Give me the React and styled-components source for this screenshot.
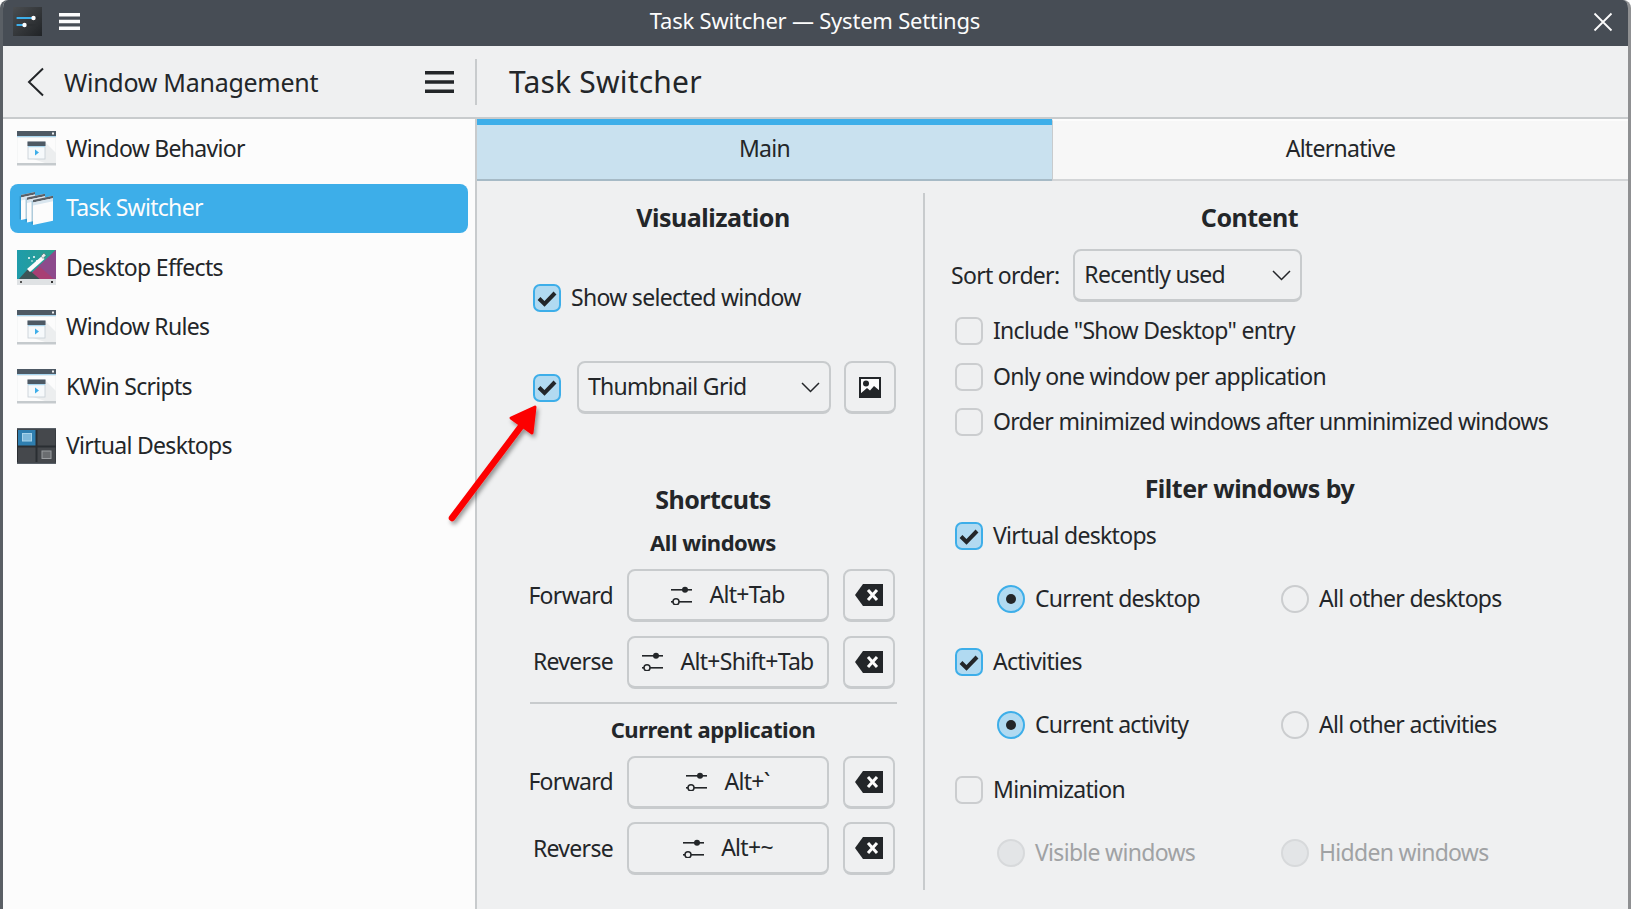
import React from 'react';
import styled, { createGlobalStyle } from 'styled-components';

const Global = createGlobalStyle`
  html, body { margin: 0; padding: 0; background: #fff; }
  body { font-family: "Noto Sans", "Open Sans", sans-serif; color: #232629; }
  * { box-sizing: border-box; }
`;

const Page = styled.div`
  position: relative;
  width: 1631px;
  height: 909px;
  overflow: hidden;
  display: flex;
  flex-direction: column;
  background: #fcfcfc;
  border-left: 3px solid #5a5f65;
  border-right: 3px solid #8f9092;
  border-top-left-radius: 8px;
  border-top-right-radius: 8px;
  font-size: 23px;
  line-height: 26px;
  letter-spacing: -0.7px;
`;
const Label = styled.span`
  display: block;
  white-space: nowrap;
  padding-bottom: 2px;
`;
const TitleBar = styled.header`
  position: relative;
  height: 46px;
  flex: none;
  display: flex;
  align-items: center;
  background: #474d55;
  padding: 0 0 3px 10px;
  gap: 17px;
  color: #fcfcfc;
`;
const TitleText = styled.div`
  position: absolute;
  left: 0;
  right: 0;
  top: 7px;
  padding-right: 1px;
  text-align: center;
  font-size: 22px;
  line-height: 26px;
  letter-spacing: -0.22px;
`;
const CloseBtn = styled.svg`
  position: absolute;
  right: 15px;
  top: 12px;
`;
const HeaderRow = styled.div`
  height: 73px;
  flex: none;
  display: flex;
  align-items: center;
  background: #eff0f1;
  border-bottom: 2px solid #c8cbcd;
`;
const HeaderLeft = styled.div`
  width: 474px;
  height: 46px;
  flex: none;
  display: flex;
  align-items: center;
  padding-left: 24px;
  padding-right: 21px;
  border-right: 2px solid #c8cbcd;
`;
const BackTitle = styled.div`
  flex: 1;
  margin-left: 19px;
  font-size: 25px;
  line-height: 30px;
  letter-spacing: -0.28px;
`;
const PageTitle = styled.div`
  margin-left: 32px;
  font-size: 30px;
  line-height: 36px;
  letter-spacing: 0.2px;
`;
const Body = styled.div`
  flex: 1;
  display: flex;
  min-height: 0;
`;
const Sidebar = styled.nav`
  width: 474px;
  flex: none;
  background: #fcfcfc;
  border-right: 2px solid #c8cbcd;
  padding: 5px 7px 0 7px;
  display: flex;
  flex-direction: column;
  gap: 10.5px;
`;
const SideItem = styled.div`
  height: 49px;
  display: flex;
  align-items: center;
  gap: 10px;
  padding-left: 7px;
  border-radius: 8px;
  background: ${(p) => (p.$active ? '#3daee9' : 'transparent')};
  color: ${(p) => (p.$active ? '#fcfcfc' : '#232629')};
`;
const Main = styled.main`
  flex: 1;
  display: flex;
  flex-direction: column;
  background: #eff0f1;
  min-width: 0;
`;
const TabBar = styled.div`
  height: 62px;
  flex: none;
  display: flex;
`;
const Tab = styled.div`
  display: flex;
  align-items: center;
  justify-content: center;
  flex: ${(p) => (p.$active ? '0 0 575px' : '1')};
  background: ${(p) => (p.$active ? '#c9e1ef' : '#f7f7f7')};
  border-top: ${(p) => (p.$active ? '6px solid #3daee9' : '2px solid #fcfcfc')};
  border-bottom: 2px solid ${(p) => (p.$active ? '#a6bac6' : '#d3d5d7')};
  border-left: ${(p) => (p.$active ? 'none' : '1px solid #c8cbcd')};
  padding-top: ${(p) => (p.$active ? '0' : '4px')};
  padding-bottom: 6px;
`;
const Columns = styled.div`
  flex: 1;
  display: flex;
  padding-top: 12px;
  padding-bottom: 19px;
  min-height: 0;
`;
const LeftCol = styled.section`
  width: 448px;
  flex: none;
  padding: 0 27px 0 53px;
  border-right: 2px solid #c8cbcd;
  display: flex;
  flex-direction: column;
`;
const RightCol = styled.section`
  flex: 1;
  padding: 0 88px 0 26px;
  display: flex;
  flex-direction: column;
`;
const Heading = styled.h2`
  margin: ${(p) => p.$top || 0}px 0 0;
  height: 30px;
  line-height: 28px;
  text-align: center;
  font-size: 25px;
  font-weight: 700;
  letter-spacing: -0.5px;
  white-space: nowrap;
`;
const SubHeading = styled.h3`
  margin: ${(p) => p.$top || 0}px 0 0;
  height: 28px;
  line-height: 26px;
  text-align: center;
  font-size: 22px;
  font-weight: 700;
  letter-spacing: -0.45px;
`;
const CheckRow = styled.div`
  margin-top: ${(p) => p.$top || 0}px;
  margin-left: ${(p) => p.$left || 0}px;
  display: flex;
  align-items: center;
  height: 28px;
  gap: 10px;
`;
const CheckBox = styled.span`
  width: 28px;
  height: 28px;
  flex: none;
  margin-left: ${(p) => p.$left || 0}px;
  display: flex;
  align-items: center;
  justify-content: center;
  border-radius: 7px;
  border: 2px solid ${(p) => (p.$on ? '#3daee9' : '#cbcdcf')};
  background: ${(p) => (p.$on ? '#b1daf1' : '#eff0f1')};
`;
const ComboRow = styled.div`
  margin-top: 49px;
  display: flex;
  align-items: center;
`;
const Combo = styled.div`
  width: ${(p) => p.$w}px;
  height: 53px;
  flex: none;
  margin-left: ${(p) => p.$left || 0}px;
  display: flex;
  align-items: center;
  justify-content: space-between;
  padding: 0 9px;
  border: 2px solid #c8cbcd;
  border-bottom-width: 3px;
  border-radius: 8px;
  background: #eff0f1;
`;
const SquareBtn = styled.div`
  width: ${(p) => p.$w || 52}px;
  height: 53px;
  margin-left: ${(p) => p.$left || 0}px;
  display: flex;
  align-items: center;
  justify-content: center;
  border: 2px solid #c8cbcd;
  border-bottom-width: 3px;
  border-radius: 8px;
  background: #eff0f1;
`;
const ShortcutGrid = styled.div`
  margin-top: ${(p) => p.$top || 0}px;
  display: grid;
  grid-template-columns: 83px 202px 52px;
  column-gap: 14px;
  row-gap: 13.5px;
  align-items: center;
`;
const ShortLabel = styled(Label)`
  justify-self: end;
`;
const KeyBtn = styled.div`
  height: 53px;
  display: flex;
  align-items: center;
  justify-content: center;
  gap: 17px;
  border: 2px solid #c8cbcd;
  border-bottom-width: 3px;
  border-radius: 8px;
  background: #eff0f1;
`;
const Divider = styled.hr`
  margin: 13px -1px 0 0;
  height: 2px;
  border: 0;
  background: #c8cbcd;
`;
const SortRow = styled.div`
  margin-top: 16px;
  display: flex;
  align-items: center;
  gap: 14px;
`;
const Radio = styled.span`
  width: 28px;
  height: 28px;
  flex: none;
  display: flex;
  align-items: center;
  justify-content: center;
  border-radius: 50%;
  border: 2px solid ${(p) => (p.$on ? '#3daee9' : p.$off ? '#d7d9db' : '#cbcdcf')};
  background: ${(p) => (p.$on ? '#b1daf1' : p.$off ? '#e3e5e7' : '#eff0f1')};
`;
const RadioDot = styled.span`
  width: 10px;
  height: 10px;
  border-radius: 50%;
  background: #232629;
`;
const RadioRow = styled.div`
  margin: 35px 0 0 46px;
  display: grid;
  grid-template-columns: 284px 1fr;
  height: 28px;
`;
const RadioItem = styled.label`
  display: flex;
  align-items: center;
  gap: 10px;
  color: ${(p) => (p.$off ? '#a0a2a4' : 'inherit')};
`;
const ArrowOverlay = styled.svg`
  position: absolute;
  left: 437px;
  top: 395px;
  pointer-events: none;
  overflow: visible;
`;

const Hamburger = ({ color, w, h, t }) => (
  <svg width={w} height={h} viewBox={`0 0 ${w} ${h}`}>
    <rect x="0" y="0" width={w} height={t} fill={color} />
    <rect x="0" y={(h - t) / 2} width={w} height={t} fill={color} />
    <rect x="0" y={h - t} width={w} height={t} fill={color} />
  </svg>
);

const AppIcon = () => (
  <svg width="29" height="29" viewBox="0 0 29 29">
    <defs>
      <linearGradient id="appbg" x1="0" y1="0" x2="1" y2="1">
        <stop offset="0" stopColor="#4a4d50" />
        <stop offset="1" stopColor="#202326" />
      </linearGradient>
    </defs>
    <rect width="29" height="29" fill="url(#appbg)" />
    <rect x="3" y="10" width="23" height="2" fill="#2c2f32" />
    <rect x="3.5" y="10" width="17" height="2" fill="#3daee9" />
    <circle cx="20.5" cy="11" r="2.2" fill="#fcfcfc" />
    <rect x="3" y="17" width="22" height="2" fill="#2c2f32" />
    <rect x="3.5" y="17" width="8" height="2" fill="#3daee9" />
    <circle cx="11.5" cy="18" r="2.2" fill="#fcfcfc" />
  </svg>
);

const WindowIcon = () => (
  <svg width="39" height="35" viewBox="0 0 39 35">
    <rect x="0" y="0" width="39" height="5" fill="#4d5964" />
    <rect x="35" y="1.5" width="2" height="2" fill="#eff0f1" />
    <rect x="0" y="5" width="39" height="1.5" fill="#a9d6ef" />
    <rect x="0" y="6.5" width="39" height="26" fill="#fcfcfc" stroke="#e3e6e8" strokeWidth="0.6" />
    <path d="M28 11 L39 22 V32 H28 L16 28 H28 Z" fill="#eceeef" />
    <rect x="0" y="32" width="39" height="2.5" fill="#c5cacd" />
    <rect x="11" y="11" width="17" height="17" fill="#f6f9fb" stroke="#c5ced4" strokeWidth="0.8" />
    <rect x="10.5" y="10.5" width="18" height="4.5" fill="#4d5964" />
    <rect x="11" y="15" width="17" height="1.2" fill="#a9d6ef" />
    <path d="M18 18.5 L22 21.5 L18 24.5 Z" fill="#3daee9" />
  </svg>
);

const SwitcherPane = ({ x, y, w }) => (
  <g transform={`translate(${x} ${y}) skewY(-12)`}>
    <rect x="-1.5" y="1" width="2" height="23" fill="#1d6f9e" opacity="0.35" />
    <rect width={w} height="25" fill="#fcfcfc" />
    <rect width={w} height="2.5" fill="#5a6168" />
    <rect y="2.5" width={w} height="3" fill="#d9e6ef" />
  </g>
);

const SwitcherIcon = () => (
  <svg width="39" height="36" viewBox="0 0 39 36">
    <SwitcherPane x={4} y={5} w={14} />
    <SwitcherPane x={10} y={7.5} w={18} />
    <SwitcherPane x={16} y={10} w={20} />
  </svg>
);

const EffectsIcon = () => (
  <svg width="39" height="35" viewBox="0 0 39 35">
    <defs>
      <linearGradient id="fxa" x1="0" y1="0" x2="1" y2="0">
        <stop offset="0" stopColor="#1f9cab" />
        <stop offset="1" stopColor="#2b9e8c" />
      </linearGradient>
    </defs>
    <rect width="39" height="31" fill="url(#fxa)" />
    <path d="M39 0 V31 H6 Z" fill="#a83f74" />
    <path d="M39 0 L22 16 L39 31 Z" fill="#8d4a8c" />
    <path d="M0 31 L11 19 L25 31 Z" fill="#3e5556" />
    <rect y="29" width="39" height="6" fill="#dfe2e4" />
    <rect x="3" y="31" width="2" height="2" fill="#555" />
    <rect x="34" y="31" width="2" height="2" fill="#333" />
    <path d="M10 19 L25 6 L27.5 9 L13 22 Z" fill="#fcfcfc" />
    <path d="M24 6 L27 3 L29 5.5 L26 8.5 Z" fill="#e8eaeb" stroke="#3e5556" strokeWidth="0.5" />
    <circle cx="12" cy="8" r="1" fill="#fcfcfc" />
    <circle cx="17" cy="7" r="1" fill="#fcfcfc" />
    <circle cx="20" cy="11" r="1" fill="#fcfcfc" />
    <circle cx="15" cy="11" r="0.8" fill="#fcfcfc" />
  </svg>
);

const DesktopsIcon = () => (
  <svg width="39" height="36" viewBox="0 0 39 36">
    <rect width="39" height="36" fill="#2a2e32" />
    <rect y="0" width="39" height="1.5" fill="#5a6168" />
    <rect y="34.5" width="39" height="1.5" fill="#5a6168" />
    <rect x="1" y="2" width="17.5" height="15.5" fill="#2f7fb0" />
    <rect x="5.5" y="5.5" width="9" height="7.5" fill="#7fb9da" stroke="#a7d3ea" />
    <rect x="20.5" y="2" width="18" height="15.5" fill="#45484c" />
    <rect x="1" y="19.5" width="17.5" height="15" fill="#45484c" />
    <rect x="20.5" y="19.5" width="18" height="15" fill="#45484c" />
    <rect x="25" y="23" width="9" height="7.5" fill="#6a6d70" stroke="#9a9da0" />
  </svg>
);

const Chevron = () => (
  <svg width="18" height="30" viewBox="0 0 18 30">
    <path d="M16 1.5 L2 15 L16 28.5" fill="none" stroke="#232629" strokeWidth="2" />
  </svg>
);

const ComboArrow = () => (
  <svg width="19" height="11" viewBox="0 0 19 11">
    <path d="M1 1 L9.5 9.5 L18 1" fill="none" stroke="#232629" strokeWidth="1.5" />
  </svg>
);

const Check = () => (
  <svg width="20" height="17" viewBox="0 0 20 17">
    <path d="M2 8.5 L7.5 14 L18 3" fill="none" stroke="#232629" strokeWidth="4" />
  </svg>
);

const ImageIcon = () => (
  <svg width="22" height="21" viewBox="0 0 22 21">
    <rect x="1" y="1" width="20" height="19" fill="#fcfcfc" stroke="#232629" strokeWidth="2" />
    <circle cx="7" cy="6.5" r="3" fill="#232629" />
    <path d="M1 17 L8 11 L11 13.5 L15 9 L21 14 V20 H1 Z" fill="#232629" />
  </svg>
);

const SlidersIcon = () => (
  <svg width="21" height="19" viewBox="0 0 21 19">
    <rect x="0" y="3" width="21" height="1.6" fill="#232629" />
    <circle cx="14" cy="3.8" r="3" fill="#232629" />
    <rect x="0" y="15" width="21" height="1.6" fill="#232629" />
    <circle cx="5" cy="15.8" r="3" fill="#eff0f1" stroke="#232629" strokeWidth="1.5" />
  </svg>
);

const DeleteIcon = () => (
  <svg width="28" height="22" viewBox="0 0 28 22">
    <path d="M8 0 H28 V22 H8 L0 11 Z" fill="#232629" />
    <path d="M13 6 L22 16 M22 6 L13 16" stroke="#fcfcfc" strokeWidth="3" />
  </svg>
);

const Check2 = ({ on, children, top, left }) => (
  <CheckRow $top={top} $left={left}>
    <CheckBox $on={on}>{on && <Check />}</CheckBox>
    <Label>{children}</Label>
  </CheckRow>
);

const RadioPair = ({ left, right, off, first }) => (
  <RadioRow>
    <RadioItem $off={off}>
      <Radio $on={first} $off={off}>{first && <RadioDot />}</Radio>
      <Label>{left}</Label>
    </RadioItem>
    <RadioItem $off={off}>
      <Radio $off={off} />
      <Label>{right}</Label>
    </RadioItem>
  </RadioRow>
);

const Shortcut = ({ label, keys }) => (
  <>
    <ShortLabel>{label}</ShortLabel>
    <KeyBtn>
      <SlidersIcon />
      <Label>{keys}</Label>
    </KeyBtn>
    <SquareBtn>
      <DeleteIcon />
    </SquareBtn>
  </>
);

const items = [
  ['Window Behavior', <WindowIcon />],
  ['Task Switcher', <SwitcherIcon />],
  ['Desktop Effects', <EffectsIcon />],
  ['Window Rules', <WindowIcon />],
  ['KWin Scripts', <WindowIcon />],
  ['Virtual Desktops', <DesktopsIcon />],
];

export default function App() {
  return (
    <>
      <Global />
      <Page>
        <TitleBar>
          <TitleText>Task Switcher — System Settings</TitleText>
          <AppIcon />
          <Hamburger color="#fcfcfc" w={21} h={17} t={3.5} />
          <CloseBtn width="20" height="20" viewBox="0 0 20 20">
            <path d="M1.5 1.5 L18.5 18.5 M18.5 1.5 L1.5 18.5" stroke="#fcfcfc" strokeWidth="1.8" />
          </CloseBtn>
        </TitleBar>
        <HeaderRow>
          <HeaderLeft>
            <Chevron />
            <BackTitle>Window Management</BackTitle>
            <Hamburger color="#232629" w={29} h={22} t={3.5} />
          </HeaderLeft>
          <PageTitle>Task Switcher</PageTitle>
        </HeaderRow>
        <Body>
          <Sidebar>
            {items.map(([label, icon], i) => (
              <SideItem key={label} $active={i === 1}>
                {icon}
                <Label>{label}</Label>
              </SideItem>
            ))}
          </Sidebar>
          <Main>
            <TabBar>
              <Tab $active><Label>Main</Label></Tab>
              <Tab><Label>Alternative</Label></Tab>
            </TabBar>
            <Columns>
              <LeftCol>
                <Heading $top={10}>Visualization</Heading>
                <Check2 on top={51} left={3}>Show selected window</Check2>
                <ComboRow>
                  <CheckBox $on $left={3}>
                    <Check />
                  </CheckBox>
                  <Combo $w={254} $left={16}>
                    <Label>Thumbnail Grid</Label>
                    <ComboArrow />
                  </Combo>
                  <SquareBtn $left={13}>
                    <ImageIcon />
                  </SquareBtn>
                </ComboRow>
                <Heading $top={71}>Shortcuts</Heading>
                <SubHeading $top={14}>All windows</SubHeading>
                <ShortcutGrid $top={12}>
                  <Shortcut label="Forward" keys="Alt+Tab" />
                  <Shortcut label="Reverse" keys="Alt+Shift+Tab" />
                </ShortcutGrid>
                <Divider />
                <SubHeading $top={12}>Current application</SubHeading>
                <ShortcutGrid $top={12}>
                  <Shortcut label="Forward" keys="Alt+`" />
                  <Shortcut label="Reverse" keys="Alt+~" />
                </ShortcutGrid>
              </LeftCol>
              <RightCol>
                <Heading $top={10}>Content</Heading>
                <SortRow>
                  <Label>Sort order:</Label>
                  <Combo $w={229}>
                    <Label>Recently used</Label>
                    <ComboArrow />
                  </Combo>
                </SortRow>
                <Check2 top={15} left={4}>Include "Show Desktop" entry</Check2>
                <Check2 top={18} left={4}>Only one window per application</Check2>
                <Check2 top={17} left={4}>Order minimized windows after unminimized windows</Check2>
                <Heading $top={38}>Filter windows by</Heading>
                <Check2 on top={18} left={4}>Virtual desktops</Check2>
                <RadioPair first left="Current desktop" right="All other desktops" />
                <Check2 on top={35} left={4}>Activities</Check2>
                <RadioPair first left="Current activity" right="All other activities" />
                <Check2 top={37} left={4}>Minimization</Check2>
                <RadioPair off left="Visible windows" right="Hidden windows" />
              </RightCol>
            </Columns>
          </Main>
        </Body>
        <ArrowOverlay width="110" height="135" viewBox="0 0 110 135">
          <defs>
            <filter id="arrowShadow" x="-30%" y="-30%" width="160%" height="160%">
              <feDropShadow dx="2" dy="3" stdDeviation="2" floodColor="#000" floodOpacity="0.4" />
            </filter>
          </defs>
          <g filter="url(#arrowShadow)" fill="#fc0000" stroke="#fc0000" strokeLinejoin="round">
            <path d="M12 123 L82 30" fill="none" strokeWidth="6.5" strokeLinecap="round" />
            <path d="M95 12 L71 23 L92 38 Z" strokeWidth="3" />
          </g>
        </ArrowOverlay>
      </Page>
    </>
  );
}
